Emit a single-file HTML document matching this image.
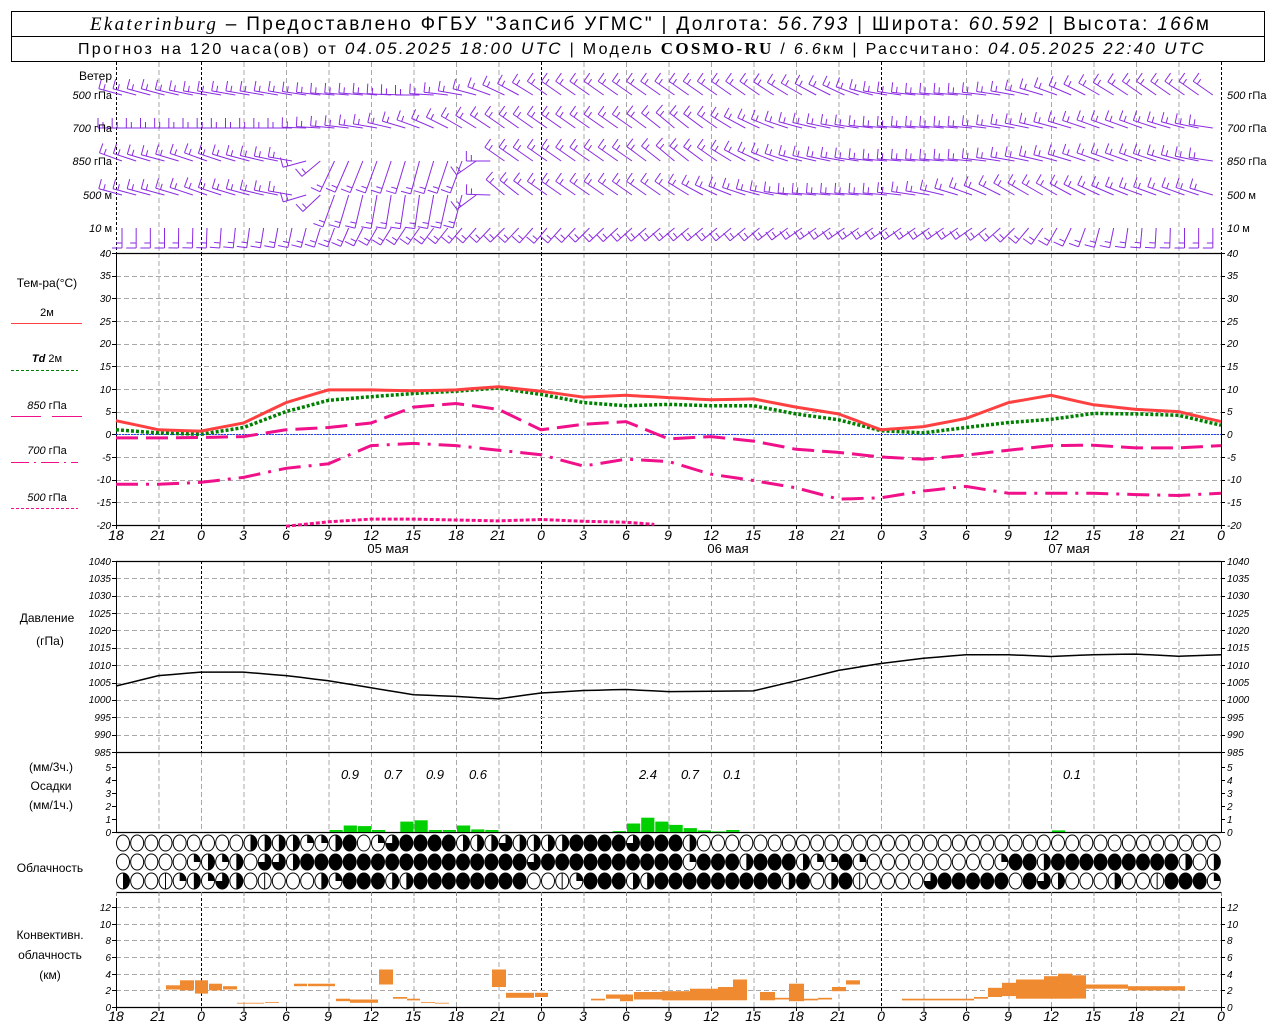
<!DOCTYPE html>
<html><head><meta charset="utf-8"><style>
html,body{margin:0;padding:0;background:#fff;width:1280px;height:1024px;overflow:hidden}
svg{display:block}
text{font-family:"Liberation Sans",sans-serif;fill:#000}
.t{font-size:11px;font-style:italic}
.l{font-size:12px}
.ax{font-size:14px;font-style:italic}
</style></head><body>
<svg id="s" width="1280" height="1024" xmlns="http://www.w3.org/2000/svg">
<rect x="11.5" y="11.5" width="1253" height="50" fill="none" stroke="#000"/>
<line x1="11" y1="36.5" x2="1265" y2="36.5" stroke="#000"/>
<text x="90" y="30" style="font-size:19px;letter-spacing:2.3px"><tspan font-family="Liberation Serif" font-style="italic">Ekaterinburg</tspan> – Предоставлено ФГБУ "ЗапСиб УГМС" | Долгота: <tspan font-style="italic">56.793</tspan> | Широта: <tspan font-style="italic">60.592</tspan> | Высота: <tspan font-style="italic">166</tspan>м</text>
<text x="78" y="54" style="font-size:16px;letter-spacing:2.3px">Прогноз на 120 часа(ов) от <tspan font-style="italic" font-size="17">04.05.2025 18:00 UTC</tspan>  | Модель <tspan font-family="Liberation Serif" font-weight="bold" font-size="17">COSMO-RU</tspan> / <tspan font-style="italic">6.6</tspan>км | Рассчитано: <tspan font-style="italic" font-size="17">04.05.2025 22:40 UTC</tspan></text>
<g id="g"></g>
<g class="l" text-anchor="end">
<text x="112" y="80" style="font-size:12px">Ветер</text>
<text x="112" y="99" class="t">500 <tspan font-style="normal">гПа</tspan></text>
<text x="112" y="132" class="t">700 <tspan font-style="normal">гПа</tspan></text>
<text x="112" y="165" class="t">850 <tspan font-style="normal">гПа</tspan></text>
<text x="112" y="199" class="t">500 <tspan font-style="normal">м</tspan></text>
<text x="112" y="232" class="t">10 <tspan font-style="normal">  м</tspan></text>
</g>
<g class="t">
<text x="1227" y="99">500 <tspan font-style="normal">гПа</tspan></text>
<text x="1227" y="132">700 <tspan font-style="normal">гПа</tspan></text>
<text x="1227" y="165">850 <tspan font-style="normal">гПа</tspan></text>
<text x="1227" y="199">500 <tspan font-style="normal">м</tspan></text>
<text x="1227" y="232">10 <tspan font-style="normal">  м</tspan></text>
</g>
<g class="l" text-anchor="middle">
<text x="47" y="287">Тем-ра(°С)</text>
<text x="47" y="316" style="font-size:11px">2м</text>
<text x="47" y="362" style="font-size:11px"><tspan font-style="italic" font-weight="bold">Td</tspan>  2м</text>
<text x="47" y="409" style="font-size:11px"><tspan font-style="italic">850</tspan> гПа</text>
<text x="47" y="454" style="font-size:11px"><tspan font-style="italic">700</tspan> гПа</text>
<text x="47" y="501" style="font-size:11px"><tspan font-style="italic">500</tspan> гПа</text>
<text x="47" y="622">Давление</text>
<text x="50" y="645">(гПа)</text>
<text x="51" y="771">(мм/3ч.)</text>
<text x="51" y="790">Осадки</text>
<text x="51" y="809">(мм/1ч.)</text>
<text x="50" y="872">Облачность</text>
<text x="50" y="939">Конвективн.</text>
<text x="50" y="959">облачность</text>
<text x="50" y="979">(км)</text>
<text x="388" y="553" style="font-size:13px">05 мая</text>
<text x="728" y="553" style="font-size:13px">06 мая</text>
<text x="1069" y="553" style="font-size:13px">07 мая</text>
</g>
<line x1="11" y1="323.5" x2="82" y2="323.5" stroke="#ff4040" stroke-width="1"/>
<line x1="11" y1="370.5" x2="78" y2="370.5" stroke="#008000" stroke-dasharray="3,2"/>
<line x1="11" y1="416.5" x2="41" y2="416.5" stroke="#f0108a"/><line x1="52" y1="416.5" x2="82" y2="416.5" stroke="#f0108a"/>
<line x1="11" y1="462.5" x2="78" y2="462.5" stroke="#f0108a" stroke-dasharray="18,5,2,5"/>
<line x1="11" y1="508.5" x2="78" y2="508.5" stroke="#f0108a" stroke-dasharray="3,2"/>
<g class="ax" text-anchor="middle" style="font-size:13px">
<text x="350" y="779">0.9</text><text x="393" y="779">0.7</text><text x="435" y="779">0.9</text><text x="478" y="779">0.6</text>
<text x="648" y="779">2.4</text><text x="690" y="779">0.7</text><text x="732" y="779">0.1</text><text x="1072" y="779">0.1</text>
</g>
<g class="ax" text-anchor="middle">
<text x="116" y="540">18</text><text x="158" y="540">21</text><text x="201" y="540">0</text><text x="243" y="540">3</text><text x="286" y="540">6</text><text x="328" y="540">9</text><text x="371" y="540">12</text><text x="413" y="540">15</text><text x="456" y="540">18</text><text x="498" y="540">21</text><text x="541" y="540">0</text><text x="583" y="540">3</text><text x="626" y="540">6</text><text x="668" y="540">9</text><text x="711" y="540">12</text><text x="753" y="540">15</text><text x="796" y="540">18</text><text x="838" y="540">21</text><text x="881" y="540">0</text><text x="923" y="540">3</text><text x="966" y="540">6</text><text x="1008" y="540">9</text><text x="1051" y="540">12</text><text x="1093" y="540">15</text><text x="1136" y="540">18</text><text x="1178" y="540">21</text><text x="1221" y="540">0</text>
<text x="116" y="1021">18</text><text x="158" y="1021">21</text><text x="201" y="1021">0</text><text x="243" y="1021">3</text><text x="286" y="1021">6</text><text x="328" y="1021">9</text><text x="371" y="1021">12</text><text x="413" y="1021">15</text><text x="456" y="1021">18</text><text x="498" y="1021">21</text><text x="541" y="1021">0</text><text x="583" y="1021">3</text><text x="626" y="1021">6</text><text x="668" y="1021">9</text><text x="711" y="1021">12</text><text x="753" y="1021">15</text><text x="796" y="1021">18</text><text x="838" y="1021">21</text><text x="881" y="1021">0</text><text x="923" y="1021">3</text><text x="966" y="1021">6</text><text x="1008" y="1021">9</text><text x="1051" y="1021">12</text><text x="1093" y="1021">15</text><text x="1136" y="1021">18</text><text x="1178" y="1021">21</text><text x="1221" y="1021">0</text>
</g>
<g class="t" style="font-size:10px" text-anchor="end">
<text x="111" y="257">40</text><text x="111" y="279">35</text><text x="111" y="302">30</text><text x="111" y="325">25</text><text x="111" y="347">20</text><text x="111" y="370">15</text><text x="111" y="393">10</text><text x="111" y="415">5</text><text x="111" y="438">0</text><text x="111" y="461">-5</text><text x="111" y="483">-10</text><text x="111" y="506">-15</text><text x="111" y="529">-20</text>
<text x="111" y="565">1040</text><text x="111" y="582">1035</text><text x="111" y="599">1030</text><text x="111" y="617">1025</text><text x="111" y="634">1020</text><text x="111" y="651">1015</text><text x="111" y="669">1010</text><text x="111" y="686">1005</text><text x="111" y="703">1000</text><text x="111" y="721">995</text><text x="111" y="738">990</text><text x="111" y="756">985</text>
<text x="111" y="771">5</text><text x="111" y="784">4</text><text x="111" y="797">3</text><text x="111" y="810">2</text><text x="111" y="823">1</text><text x="111" y="836">0</text>
<text x="111" y="911">12</text><text x="111" y="928">10</text><text x="111" y="944">8</text><text x="111" y="961">6</text><text x="111" y="978">4</text><text x="111" y="994">2</text><text x="111" y="1011">0</text>
</g>
<g class="t" style="font-size:10px">
<text x="1227" y="257">40</text><text x="1227" y="279">35</text><text x="1227" y="302">30</text><text x="1227" y="325">25</text><text x="1227" y="347">20</text><text x="1227" y="370">15</text><text x="1227" y="393">10</text><text x="1227" y="415">5</text><text x="1227" y="438">0</text><text x="1227" y="461">-5</text><text x="1227" y="483">-10</text><text x="1227" y="506">-15</text><text x="1227" y="529">-20</text>
<text x="1227" y="565">1040</text><text x="1227" y="582">1035</text><text x="1227" y="599">1030</text><text x="1227" y="617">1025</text><text x="1227" y="634">1020</text><text x="1227" y="651">1015</text><text x="1227" y="669">1010</text><text x="1227" y="686">1005</text><text x="1227" y="703">1000</text><text x="1227" y="721">995</text><text x="1227" y="738">990</text><text x="1227" y="756">985</text>
<text x="1227" y="771">5</text><text x="1227" y="784">4</text><text x="1227" y="797">3</text><text x="1227" y="810">2</text><text x="1227" y="823">1</text><text x="1227" y="836">0</text>
<text x="1227" y="911">12</text><text x="1227" y="928">10</text><text x="1227" y="944">8</text><text x="1227" y="961">6</text><text x="1227" y="978">4</text><text x="1227" y="994">2</text><text x="1227" y="1011">0</text>
</g>
</svg>
<script>
(function(){
var g=document.getElementById('g'),NS='http://www.w3.org/2000/svg';
function el(n,a){var e=document.createElementNS(NS,n);for(var k in a)e.setAttribute(k,a[k]);g.appendChild(e);return e;}
function ln(x1,y1,x2,y2,c,w,d){var a={x1:x1,y1:y1,x2:x2,y2:y2,stroke:c||'#000','stroke-width':w||1};if(d)a['stroke-dasharray']=d;return el('line',a);}
var X0=116,DX=42.5,L=116,R=1221;
function xi(i){return X0+DX*i;}
var panels=[[62,253],[253,525],[561,752],[752,832],[898,1007]];
panels.forEach(function(p){
 for(var i=1;i<26;i++){var isz=(i%8==2);ln(xi(i)+.5,p[0],xi(i)+.5,p[1],isz&&p[0]!=752?'#000':'#a8a8a8',1,isz&&p[0]!=752?'3,2':'5,3');}
});
for(var v=35;v>=-15;v-=5){var y=434.3-v*4.533;ln(L,Math.round(y)+.5,R,Math.round(y)+.5,'#a8a8a8',1,'5,3');}
for(var p=1035;p>985;p-=5){var y=561+(1040-p)*3.473;ln(L,Math.round(y)+.5,R,Math.round(y)+.5,'#a8a8a8',1,'5,3');}
for(var k=2;k<=12;k+=2){var y=1007-k*8.33;ln(L,Math.round(y)+.5,R,Math.round(y)+.5,'#a8a8a8',1,'5,3');}
[253,525,561,752,832,892,1007].forEach(function(y){ln(L,y+.5,R,y+.5,'#000',1.3);});
[[62,253],[253,525],[561,752],[752,832],[898,1007]].forEach(function(p){ln(L+.5,p[0],L+.5,p[1],'#000',1,p[0]==62?'3,2':null);ln(R+.5,p[0],R+.5,p[1],'#000',1,p[0]==62?'3,2':null);});
function ticks(ys){ys.forEach(function(y){ln(L-4,y+.5,L,y+.5);ln(R,y+.5,R+4,y+.5);});}
var ty=[];for(var v=40;v>=-20;v-=5)ty.push(Math.round(434.3-v*4.533));ticks(ty);
ty=[];for(var p=1040;p>=985;p-=5)ty.push(Math.round(561+(1040-p)*3.473));ticks(ty);
ticks([767,780,793,806,819,832]);
ty=[];for(var k=0;k<=12;k+=2)ty.push(Math.round(1007-k*8.33));ticks(ty);
for(var i=0;i<=26;i++){ln(xi(i)+.5,525,xi(i)+.5,529);ln(xi(i)+.5,1007,xi(i)+.5,1011);ln(xi(i)+.5,892,xi(i)+.5,896,'#888');}
ln(L,434.5,R,434.5,'#2040ff',1,'2,1');
function interp(a){var o=[];for(var h=0;h<=78;h++){var i=Math.floor(h/3),f=(h%3)/3;var v0=a[i],v1=a[Math.min(i+1,a.length-1)];if(v0==null||v1==null){o.push(null);continue;}o.push(v0+(v1-v0)*f);}return o;}
function poly(a,yf,c,w,d){var pts=[];var o=interp(a);o.forEach(function(v,h){if(v!=null)pts.push((X0+h*DX/3).toFixed(1)+','+yf(v).toFixed(1));});var at={points:pts.join(' '),fill:'none',stroke:c,'stroke-width':w};if(d)at['stroke-dasharray']=d;el('polyline',at);}
var ty2=function(v){return 434.3-v*4.533;};
var T=[3,1,0.7,2.5,7,9.8,9.8,9.6,9.8,10.5,9.5,8.2,8.6,8.1,7.6,7.8,6,4.5,1,1.7,3.5,7,8.6,6.5,5.5,5,2.8];
var Td=[1,0.3,0,1.5,5,7.5,8.3,9,9.5,10.2,8.8,7,6.3,6.6,6.3,6.3,4.5,3.2,0.8,0.3,1.5,2.6,3.3,4.6,4.5,4.2,2];
var P850=[-0.8,-0.8,-0.7,-0.5,1,1.5,2.5,6,6.8,5.5,1,2.2,2.8,-1,-0.5,-1.5,-3.3,-4,-5,-5.5,-4.6,-3.5,-2.5,-2.4,-3,-3,-2.5];
var P700=[-11,-11,-10.6,-9.5,-7.5,-6.5,-2.5,-2,-2.5,-3.5,-4.5,-7,-5.5,-6,-8.8,-10.2,-11.8,-14.3,-14,-12.5,-11.5,-13,-13,-13,-13.3,-13.5,-13];
var P500=[null,null,null,null,-20.3,-19.3,-18.7,-18.7,-18.9,-19.1,-18.8,-19.2,-19.4,-20.1,null,null,null,null,null,null,null,null,null,null,null,null,null];
poly(P500,ty2,'#f0108a',3,'4,2');
poly(P700,ty2,'#f0108a',3,'22,8,3,8');
poly(P850,ty2,'#f0108a',3,'22,8');
poly(Td,ty2,'#008000',3.5,'3,2');
poly(T,ty2,'#ff4040',3);
var PR=[1004,1007,1008,1008,1007,1005.5,1003.5,1001.5,1001,1000.3,1002,1002.7,1003,1002.4,1002.5,1002.6,1005.5,1008.5,1010.5,1012,1013,1013,1012.5,1013,1013.2,1012.6,1013];
poly(PR,function(v){return 561+(1040-v)*3.473;},'#000',1.5);
var pb=[[15,.15],[16,.5],[17,.45],[18,.15],[20,.8],[21,.9],[22,.15],[23,.15],[24,.5],[25,.2],[26,.15],[35,.07],[36,.65],[37,1.1],[38,.8],[39,.55],[40,.3],[41,.12],[42,.05],[43,.15],[66,.12]];
var hw=DX/3;
pb.forEach(function(b){var h=b[1]*13;el('rect',{x:(X0+b[0]*hw+1).toFixed(1),y:(832-h).toFixed(1),width:(hw-1).toFixed(1),height:h.toFixed(1),fill:'#00d000'});});
var cb=[[166,180,2.1,2.6],[180,194,2,3.2],[195,208,1.6,3.2],[209,222,2,2.8],[223,237,2.1,2.5],[237,264,.4,.5],[265,279,.5,.6],[294,307,2.5,2.8],[308,335,2.5,2.8],[336,350,.7,1],[350,364,.5,.9],[364,378,.5,.9],[379,393,2.7,4.5],[393,407,1,1.2],[407,420,.8,1],[421,435,.5,.6],[435,449,.4,.5],[492,506,2.4,4.5],[506,534,1.1,1.7],[535,548,1.2,1.7],[591,605,.8,1],[606,620,1,1.5],[620,633,.7,1.5],[634,662,.9,1.8],[662,690,.8,1.9],[690,718,.8,2.2],[718,733,.8,2.4],[733,747,.8,3.3],[760,775,.8,1.8],[775,789,.9,1.1],[789,804,.7,2.8],[804,818,.8,1],[818,832,.9,1.1],[832,846,1.9,2.4],[846,860,2.7,3.2],[902,974,.8,1],[974,988,1,1.2],[988,1002,1.2,2.3],[1002,1016,1.3,2.9],[1016,1044,1,3.3],[1044,1058,1,3.7],[1058,1072,1,4],[1072,1086,1,3.8],[1086,1128,2.2,2.7],[1128,1185,2,2.5]];
cb.forEach(function(b){var y1=1007-b[3]*8.33,y2=1007-b[2]*8.33;el('rect',{x:b[0],y:y1.toFixed(1),width:b[1]-b[0],height:(y2-y1).toFixed(1),fill:'#f08a30'});});
var rows=[
"000000000222211240134444222322224444344420000000000000000000000000000000000000",
"000001212033244444444444444443444444444414442444211410000000001442444444444202",
"200012132000002144422444444440001444224444444442402400000344444043200020004441"];
var cy=[843,862,881],rx=6.5,ry=8;
rows.forEach(function(r,ri){for(var h=0;h<78;h++){var c=+r[h]||0,cx=123+h*hw,y=cy[ri];
 el('ellipse',{cx:cx,cy:y,rx:rx,ry:ry,fill:c==4?'#000':'#fff',stroke:'#000','stroke-width':1});
 var d=null;
 if(c==1)d='M'+cx+' '+y+'L'+cx+' '+(y-ry)+'A'+rx+' '+ry+' 0 0 1 '+(cx+rx)+' '+y+'Z';
 if(c==2)d='M'+cx+' '+(y-ry)+'A'+rx+' '+ry+' 0 0 1 '+cx+' '+(y+ry)+'Z';
 if(c==3)d='M'+cx+' '+y+'L'+cx+' '+(y-ry)+'A'+rx+' '+ry+' 0 1 1 '+(cx-rx)+' '+y+'Z';
 if(d)el('path',{d:d,fill:'#000'});
 if(c==0&&(h%7==3&&ri==2))ln(cx,y-ry,cx,y+ry);
}});
var lev=[[95,[195,195,190,190,190,185,185,180,190,205,215,215,215,215,215,215,210,205,190,185,185,190,200,210,215,215,215]],
[128,[180,180,180,180,180,185,190,200,210,215,215,215,215,220,215,205,195,190,185,185,185,190,195,200,200,195,185]],
[161,[200,195,200,195,190,115,110,105,110,215,215,215,215,220,215,205,195,190,185,185,185,190,195,200,200,195,185]],
[195,[195,195,200,195,190,110,100,98,105,220,215,215,215,215,205,195,185,185,185,190,200,210,210,205,200,200,195]],
[228,[90,90,92,98,102,110,120,125,130,135,130,135,138,140,140,140,145,145,145,145,145,135,120,105,95,90,90]]];
var pc='#8a2be2';
lev.forEach(function(l){for(var h=0;h<78;h++){var i=Math.floor(h/3),f=(h%3)/3;var a=l[1][i]+(l[1][Math.min(i+1,26)]-l[1][i])*f;
 var rad=a*Math.PI/180,vert=(a<125&&l[0]<220);var len=vert?34:(l[0]>220?20:24);var x=X0+h*hw+6,y=l[0];
 var ex=x+Math.cos(rad)*len,ey=y+Math.sin(rad)*len;
 ln(x,y,ex,ey,pc,1);
 var br=rad+Math.PI/2;
 if(l[0]>220||vert)br=rad+Math.PI/2;
 for(var k=0;k<2;k++){var bx=x+Math.cos(rad)*(len-k*5),by=y+Math.sin(rad)*(len-k*5);
  var bl=k?6:10;ln(bx,by,bx+Math.cos(br)*bl,by+Math.sin(br)*bl,pc,1);}
}});
})();
</script>
</body></html>
